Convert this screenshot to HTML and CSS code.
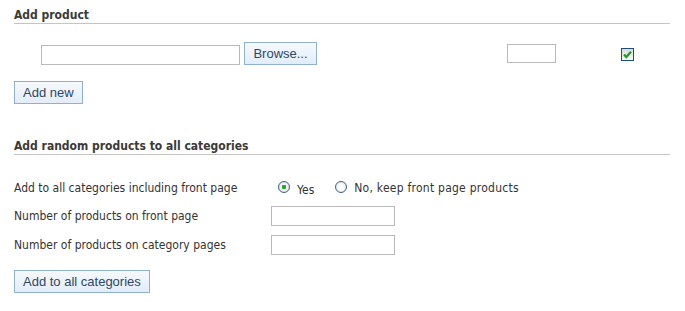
FILE: index.html
```html
<!DOCTYPE html>
<html lang="en">
<head>
  <meta charset="UTF-8">
  <title>Add product</title>
  <link rel="stylesheet" href="styles.css">
</head>
<body>
  <div class="page">
    <h3 class="section-title">Add product</h3>
    <div class="product-row">
      <span class="field file-field"></span>
      <button class="btn browse">Browse...</button>
      <span class="field qty-field"></span>
      <span class="check">
        <svg width="11" height="11" viewBox="0 0 11 11"><path d="M2 5.5 L4.3 8 L9 2.8" fill="none" stroke="#1e9a2a" stroke-width="2.2"/></svg>
      </span>
    </div>
    <button class="btn">Add new</button>

    <h3 class="section-title second">Add random products to all categories</h3>
    <div class="form-row choice-row">
      <span class="label">Add to all categories including front page</span>
      <span class="radio on"></span><span class="opt">Yes</span>
      <span class="radio off"></span><span class="opt no">No, keep front page products</span>
    </div>
    <div class="form-row">
      <span class="label">Number of products on front page</span>
      <span class="field num-field"></span>
    </div>
    <div class="form-row">
      <span class="label">Number of products on category pages</span>
      <span class="field num-field"></span>
    </div>
    <button class="btn submit">Add to all categories</button>
  </div>
</body>
</html>
```

FILE: styles.css
```css
body {
  margin: 0;
  background: #fff;
  color: #333;
  font-family: "DejaVu Sans Condensed", "DejaVu Sans", sans-serif;
  font-size: 12px;
}

.page {
  width: 656px;
  padding: 9px 0 0 14px;
}

.section-title {
  margin: 0;
  padding-bottom: 1px;
  border-bottom: 1px solid #c4c4c4;
  font-size: 12px;
  font-weight: bold;
  color: #3a3a3a;
  line-height: 13px;
}

.section-title.second {
  margin-top: 36px;
}

.product-row {
  display: flex;
  align-items: flex-start;
  height: 23px;
  margin: 18px 0 16px;
}

.field {
  display: block;
  box-sizing: border-box;
  border: 1px solid #b9b9b9;
  background: #fff;
}

.file-field {
  width: 199px;
  height: 20px;
  margin: 3px 4px 0 27px;
}

.qty-field {
  width: 49px;
  height: 19px;
  margin: 2px 0 0 190px;
}

.check {
  display: flex;
  align-items: center;
  justify-content: center;
  box-sizing: border-box;
  width: 13px;
  height: 13px;
  margin: 6px 0 0 65px;
  border: 1px solid #1d4f7c;
  background: linear-gradient(#dcdcd6, #f6f6f3);
}

.btn {
  display: block;
  box-sizing: border-box;
  height: 23px;
  padding: 0 8px;
  border: 1px solid #8fb0cf;
  background: linear-gradient(#f6f9fd, #e2edf9);
  color: #2f4766;
  font-family: "Liberation Sans", Arial, sans-serif;
  font-size: 13px;
  line-height: 21px;
}

.browse {
  width: 73px;
  padding: 0;
}

.form-row {
  display: flex;
  align-items: center;
  height: 20px;
  margin-top: 9px;
}

.form-row.choice-row {
  margin-top: 23px;
  margin-bottom: -1px;
}

.label {
  width: 257px;
}

.radio {
  box-sizing: border-box;
  width: 12px;
  height: 12px;
  margin-top: -3px;
  margin-left: 7px;
  border: 1px solid #3e6287;
  border-radius: 50%;
  background: radial-gradient(circle, #fff 30%, #d8d8d2 100%);
}

.radio.on {
  background: radial-gradient(circle, #2aa038 0 2px, #f6f6f3 2.5px, #d8d8d2 100%);
}

.radio.off {
  margin-left: 21px;
}

.opt {
  margin-left: 7px;
  margin-top: 3px;
}

.opt.no {
  margin-left: 7px;
  margin-top: 0;
  letter-spacing: 0.25px;
}

.num-field {
  width: 124px;
  height: 20px;
}

.submit {
  margin-top: 15px;
}
```
